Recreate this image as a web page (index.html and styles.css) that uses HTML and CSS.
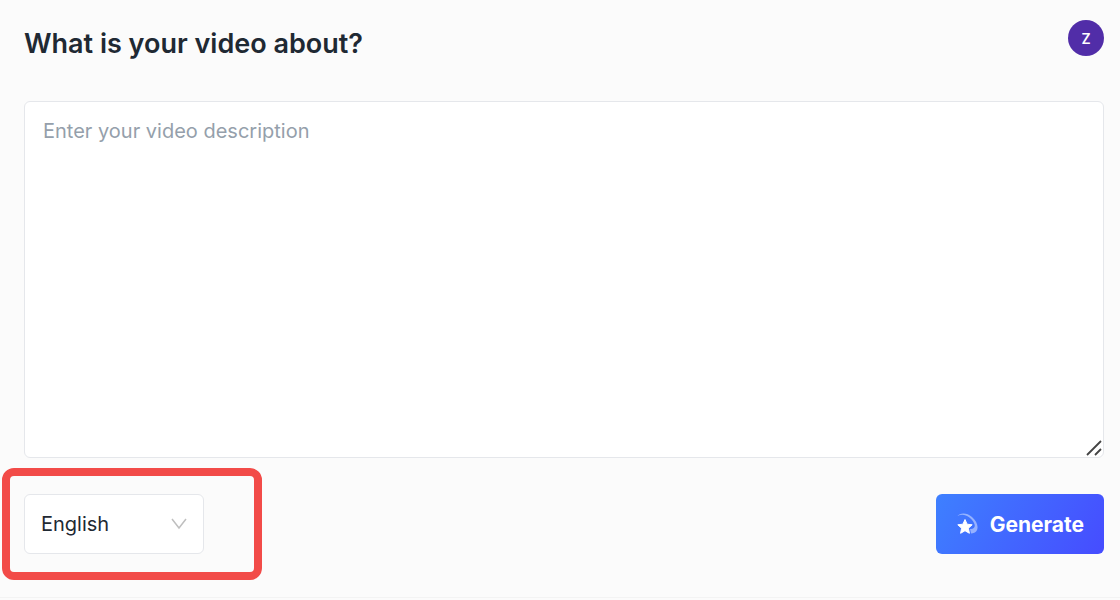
FILE: index.html
```
<!DOCTYPE html>
<html lang="en">
<head>
  <meta charset="UTF-8" />
  <meta name="viewport" content="width=device-width, initial-scale=1" />
  <title>Generate video</title>
  <link rel="stylesheet" href="styles.css">
</head>
<body>
  <form class="video-form">
    <header class="form-header">
      <h1 class="form-title"><label for="description">What is your video about?</label></h1>
      <button type="button" class="avatar">Z</button>
    </header>

    <div class="description">
      <textarea id="description" class="description-input" placeholder="Enter your video description"></textarea>
      <svg class="resize-grip" viewBox="0 0 16 16" aria-hidden="true">
        <path d="M1 15 15 1M9 15l6-6" />
      </svg>
    </div>

    <div class="form-actions">
      <div class="language">
        <select class="language-select" aria-label="Language">
          <option>English</option>
        </select>
        <svg class="language-arrow" viewBox="0 0 16 12" aria-hidden="true">
          <path d="M1 1l7 9 7-9" />
        </svg>
        <span class="highlight"></span>
      </div>

      <button type="submit" class="generate-btn">
        <svg class="generate-icon" viewBox="0 0 22 22" aria-hidden="true">
          <path class="trail" d="M1.500 3C4-.5 11-.5 16 4c5 4.500 7 10 4.500 14-1 1.500-3 2.500-5.500 2.500l-1-4.500c4 .5 6-2 4-6C15 4 8-.5 1.500 3z" />
          <path class="star" d="M9 6.500l2.100 4.700 5.100.6-3.800 3.400 1 5.100L9 17.700l-4.400 2.600 1-5.100-3.800-3.400 5.100-.6z" />
        </svg>
        Generate
      </button>
    </div>
  </form>
</body>
</html>
```
FILE: styles.css
```
* {
  box-sizing: border-box;
}
body {
  margin: 0;
  background: #fbfbfb;
  font-family: Inter, "Liberation Sans", sans-serif;
  color: #1f2933;
}
.video-form {
  display: flex;
  flex-direction: column;
  min-height: calc(100vh - 2px);
  padding: 20px 16px 43px 24px;
  border-bottom: 1px solid #f3f3f3;
}
.form-header {
  display: flex;
  justify-content: space-between;
  align-items: flex-start;
  margin-bottom: 33px;
}
.form-title {
  margin: 0;
  font-size: 27px;
  font-weight: 600;
  line-height: 48px;
}
.avatar {
  width: 36px;
  height: 36px;
  padding: 0;
  border: none;
  border-radius: 50%;
  background: #512da8;
  color: #fff;
  font-family: inherit;
  font-size: 14px;
  font-weight: 600;
  cursor: pointer;
}
.description {
  position: relative;
  flex: 1;
  display: flex;
  margin-bottom: 36px;
}
.description-input {
  flex: 1;
  min-height: 200px;
  padding: 14px 18px;
  border: 1px solid #e5e7eb;
  border-radius: 6px;
  background: #fff;
  color: inherit;
  font-family: inherit;
  font-size: 20px;
  line-height: 30px;
  resize: vertical;
  outline: none;
}
.description-input::placeholder {
  color: #959fab;
}
.description-input::-webkit-resizer {
  display: none;
}
.resize-grip {
  position: absolute;
  right: 2px;
  bottom: 2px;
  width: 16px;
  height: 16px;
  fill: none;
  stroke: #444;
  stroke-width: 1.8;
  pointer-events: none;
}
.form-actions {
  display: flex;
  justify-content: space-between;
  align-items: center;
}
.language {
  position: relative;
}
.language-select {
  display: block;
  width: 180px;
  height: 60px;
  padding: 0 40px 0 16px;
  border: 1px solid #e5e7eb;
  border-radius: 6px;
  background: #fff;
  color: inherit;
  font-family: inherit;
  font-size: 20px;
  appearance: none;
  outline: none;
}
.language-arrow {
  position: absolute;
  right: 17px;
  top: 24px;
  width: 16px;
  height: 12px;
  fill: none;
  stroke: #bfbfbf;
  stroke-width: 1.5;
  pointer-events: none;
}
.highlight {
  position: absolute;
  top: -26px;
  left: -22px;
  width: 260px;
  height: 112px;
  border: 8px solid #f24b48;
  border-radius: 12px;
  pointer-events: none;
}
.generate-btn {
  display: flex;
  align-items: center;
  gap: 12px;
  height: 60px;
  padding: 0 20px;
  border: none;
  border-radius: 6px;
  background: linear-gradient(120deg, #3e80ff, #464cff);
  color: #fff;
  font-family: inherit;
  font-size: 21px;
  font-weight: 700;
  cursor: pointer;
}
.generate-icon {
  width: 22px;
  height: 22px;
}
.trail {
  fill: #fff;
  opacity: 0.45;
}
.star {
  fill: #fff;
  stroke: #fff;
  stroke-linejoin: round;
}
```
